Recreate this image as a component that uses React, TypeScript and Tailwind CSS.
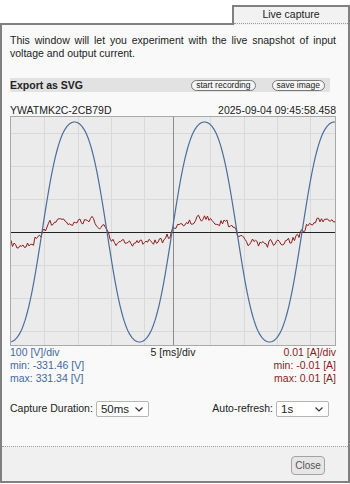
import React from "react";

const W = 326;
const H = 230;
const CX = 162;
const CY = 115;

const vGrid = [33, 67, 100, 133, 199, 233, 266, 299];
const hGrid = [16, 49, 82, 148, 181, 214];

const phase = (x: number) => (2 * Math.PI * (x - 31)) / 130;

function voltagePath() {
  const pts: string[] = [];
  for (let x = 0; x <= W; x += 1) {
    const t = phase(x);
    const s = (Math.sin(t) + 0.05 * Math.sin(3 * t)) / 0.95;
    pts.push(`${x},${(CY - 110 * s).toFixed(1)}`);
  }
  return "M" + pts.join(" L");
}

function currentPath() {
  let seed = 4242;
  const rnd = () => {
    seed = (seed * 16807) % 2147483647;
    return seed / 2147483647;
  };
  let n = 0;
  const pts: string[] = [];
  for (let x = 0; x <= W; x += 1.5) {
    n = 0.35 * n + (rnd() - 0.5) * 8;
    const t = phase(x);
    const i = (12 * Math.tanh(2 * Math.sin(t))) / Math.tanh(2);
    pts.push(`${x.toFixed(1)},${(CY - i + n).toFixed(1)}`);
  }
  return "M" + pts.join(" L");
}

const vPath = voltagePath();
const iPath = currentPath();

function Chart() {
  return (
    <svg width={W} height={H} className="block border border-[#a9a9a9] bg-[#ebebeb] box-border">
      {vGrid.map((x) => (
        <line key={"v" + x} x1={x + 0.5} x2={x + 0.5} y1={0} y2={H} stroke="#d9d9d9" strokeWidth={1} />
      ))}
      {hGrid.map((y) => (
        <line key={"h" + y} x1={0} x2={W} y1={y + 0.5} y2={y + 0.5} stroke="#d9d9d9" strokeWidth={1} />
      ))}
      <line x1={CX + 0.5} x2={CX + 0.5} y1={0} y2={H} stroke="#8c8c8c" strokeWidth={1} />
      <line x1={0} x2={W} y1={CY + 0.5} y2={CY + 0.5} stroke="#222" strokeWidth={1} />
      <path d={iPath} fill="none" stroke="#8b1c1c" strokeWidth={1} strokeLinejoin="round" />
      <path d={vPath} fill="none" stroke="#4a6d9b" strokeWidth={1.2} strokeLinejoin="round" />
    </svg>
  );
}

function Chevron() {
  return (
    <svg width="8" height="5" viewBox="0 0 8 5" className="pointer-events-none absolute right-[6px] top-[6px]">
      <path d="M0.5 0.5 L4 4 L7.5 0.5" fill="none" stroke="#333" strokeWidth="1.2" />
    </svg>
  );
}

function Select({ value, options }: { value: string; options: string[] }) {
  return (
    <div className="relative w-[53px] h-[16px]">
      <select
        defaultValue={value}
        className="appearance-none w-full h-full border border-[#b5b5b5] rounded-[2px] bg-white pl-[4px] text-[11.5px] leading-[14px] text-[#222] outline-none"
      >
        {options.map((o) => (
          <option key={o}>{o}</option>
        ))}
      </select>
      <Chevron />
    </div>
  );
}

export default function App() {
  return (
    <div className="w-[350px] h-[484px] bg-white font-['Liberation_Sans',Arial,sans-serif] text-[#222]">
      {/* tab row */}
      <div className="flex h-[25px] items-end">
        <div className="flex-1 border-b-2 border-[#808080]" />
        <div className="w-[118px] h-[20px] flex flex-col border-t-2 border-l-2 border-r-2 border-[#808080] bg-[#f2f2f2]">
          <div className="flex-1 text-center text-[10.5px] leading-[15px]">Live capture</div>
          <div className="border-t border-dotted border-[#9a9a9a]" />
          <div className="h-[1px]" />
        </div>
      </div>

      {/* window body */}
      <div className="h-[458px] flex flex-col border-l-2 border-r-2 border-b-2 border-[#808080] bg-[#f9f9f9]">
        <div className="flex-1 pl-[8px] pr-[12px] pt-[9px]">
          <p className="text-[10.5px] leading-[13px] text-justify">
            This window will let you experiment with the live snapshot of input voltage and output current.
          </p>

          <div className="mt-[18px] mr-[6px] h-[14px] flex items-center bg-[#e2e2e2] pr-[5px]">
            <span className="font-bold text-[10.5px] leading-[13px]">Export as SVG</span>
            <button className="ml-auto h-[11px] px-[4px] rounded-full border border-[#777] bg-[#f5f5f5] text-[8.5px] leading-[9px] text-[#222]">
              start recording
            </button>
            <button className="ml-[16px] h-[11px] px-[4px] rounded-full border border-[#777] bg-[#f5f5f5] text-[8.5px] leading-[9px] text-[#222]">
              save image
            </button>
          </div>

          <div className="mt-[12px] flex justify-between text-[10.5px] leading-[12px]">
            <span>YWATMK2C-2CB79D</span>
            <span>2025-09-04 09:45:58.458</span>
          </div>

          <Chart />

          <div className="grid grid-cols-3 text-[10.5px] leading-[13px]">
            <span className="text-[#41699e]">100 [V]/div</span>
            <span className="text-center">5 [ms]/div</span>
            <span className="text-right text-[#8b1c1c]">0.01 [A]/div</span>
            <span className="text-[#41699e]">min: -331.46 [V]</span>
            <span />
            <span className="text-right text-[#8b1c1c]">min: -0.01 [A]</span>
            <span className="text-[#41699e]">max: 331.34 [V]</span>
            <span />
            <span className="text-right text-[#8b1c1c]">max: 0.01 [A]</span>
          </div>

          <div className="mt-[16px] flex items-center text-[10.5px] pr-[7px]">
            <span className="mr-[3px]">Capture Duration:</span>
            <Select value="50ms" options={["50ms", "100ms", "200ms"]} />
            <span className="ml-auto mr-[3px]">Auto-refresh:</span>
            <Select value="1s" options={["1s", "2s", "5s", "off"]} />
          </div>
        </div>

        <div className="h-[35px] border-t border-dotted border-[#a0a0a0] bg-[#f0f0f0] flex justify-end items-start pt-[9px] pr-[23px]">
          <button className="w-[34px] h-[19px] rounded-[4px] border border-[#a3a3a3] bg-[#e6e6e6] text-[10px] text-[#555]">
            Close
          </button>
        </div>
      </div>
    </div>
  );
}
